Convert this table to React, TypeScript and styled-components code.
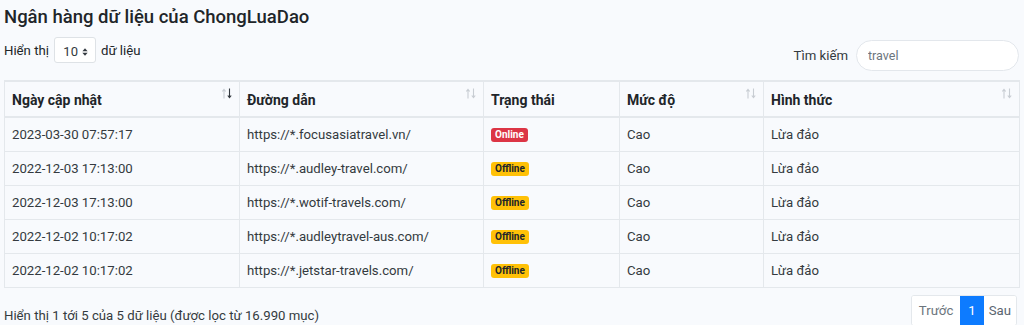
import * as React from "react";
import styled, { createGlobalStyle } from "styled-components";

const GlobalStyle = createGlobalStyle`
  html, body {
    margin: 0;
    padding: 0;
    background: #f8fafd;
    font-family: Roboto, "Noto Sans", Arial, sans-serif;
    color: #212529;
  }
`;

type Row = {
  date: string;
  url: string;
  online: boolean;
};

const rows: Row[] = [
  { date: "2023-03-30 07:57:17", url: "https://*.focusasiatravel.vn/", online: true },
  { date: "2022-12-03 17:13:00", url: "https://*.audley-travel.com/", online: false },
  { date: "2022-12-03 17:13:00", url: "https://*.wotif-travels.com/", online: false },
  { date: "2022-12-02 10:17:02", url: "https://*.audleytravel-aus.com/", online: false },
  { date: "2022-12-02 10:17:02", url: "https://*.jetstar-travels.com/", online: false }
];

const columns = [
  { label: "Ngày cập nhật", width: 235, sort: "desc" },
  { label: "Đường dẫn", width: 244, sort: "none" },
  { label: "Trạng thái", width: 136, sort: null },
  { label: "Mức độ", width: 144, sort: "none" },
  { label: "Hình thức", width: 256, sort: "none" }
];

const SortIcon = ({ dir }: { dir: string }) => {
  const up = dir === "asc" ? "#343a40" : "#c8cdd3";
  const down = dir === "desc" ? "#343a40" : "#c8cdd3";
  return (
    <SortArrows viewBox="0 0 10 11">
      <path d="M2 10.5 V1.5 M0.3 3.5 L2 1.3 L3.7 3.5" stroke={up} strokeWidth="1.1" fill="none" />
      <path d="M7.5 0.5 V9.5 M5.8 7.5 L7.5 9.7 L9.2 7.5" stroke={down} strokeWidth="1.1" fill="none" />
    </SortArrows>
  );
};

const App = () => {
  return (
    <Page>
      <GlobalStyle />
      <Title>Ngân hàng dữ liệu của ChongLuaDao</Title>
      <Controls>
        <LengthLabel>
          Hiển thị
          <Select>
            10
            <Caret viewBox="0 0 8 12">
              <path d="M4 1 L7.5 5 H0.5 Z" fill="#343a40" />
              <path d="M4 11 L7.5 7 H0.5 Z" fill="#343a40" />
            </Caret>
          </Select>
          dữ liệu
        </LengthLabel>
        <SearchLabel>
          Tìm kiếm
          <SearchInput defaultValue="travel" />
        </SearchLabel>
      </Controls>
      <Table>
        <colgroup>
          {columns.map(c => (
            <col key={c.label} style={{ width: c.width }} />
          ))}
        </colgroup>
        <thead>
          <tr>
            {columns.map(c => (
              <Th key={c.label}>
                {c.label}
                {c.sort && <SortIcon dir={c.sort} />}
              </Th>
            ))}
          </tr>
        </thead>
        <tbody>
          {rows.map((r, i) => (
            <tr key={i}>
              <Td>{r.date}</Td>
              <Td>{r.url}</Td>
              <Td>
                <Badge $online={r.online}>{r.online ? "Online" : "Offline"}</Badge>
              </Td>
              <Td>Cao</Td>
              <Td>Lừa đảo</Td>
            </tr>
          ))}
        </tbody>
      </Table>
      <Footer>
        <Info>Hiển thị 1 tới 5 của 5 dữ liệu (được lọc từ 16.990 mục)</Info>
        <Pagination>
          <PageButton $disabled>Trước</PageButton>
          <PageButton $active>1</PageButton>
          <PageButton>Sau</PageButton>
        </Pagination>
      </Footer>
    </Page>
  );
};

const Page = styled.div`
  padding: 0 5px 0 4px;
  font-size: 13.2px;
`;

const Title = styled.h5`
  margin: 0;
  padding-top: 6px;
  font-size: 18.5px;
  font-weight: 500;
  line-height: 22px;
`;

const Controls = styled.div`
  display: flex;
  justify-content: space-between;
  align-items: flex-start;
  margin-top: 10px;
  height: 42px;
`;

const LengthLabel = styled.label`
  display: flex;
  align-items: center;
  gap: 5px;
  font-size: 13.2px;
  margin-top: -1px;
`;

const Select = styled.div`
  display: flex;
  align-items: center;
  justify-content: flex-end;
  gap: 4px;
  width: 42px;
  height: 26px;
  box-sizing: border-box;
  padding: 3px 7px 0 0;
  background: #fff;
  border: 1px solid #dee2e6;
  border-radius: 3px;
  font-size: 13px;
  color: #343a40;
`;

const Caret = styled.svg`
  width: 6px;
  height: 10px;
`;

const SearchLabel = styled.label`
  display: flex;
  align-items: center;
  gap: 8px;
  padding-top: 2px;
  font-size: 13.2px;
  color: #343a40;
`;

const SearchInput = styled.input`
  width: 163px;
  height: 31px;
  box-sizing: border-box;
  border: 1px solid #e3e7ec;
  border-radius: 16px;
  background: #fff;
  padding: 0 11px;
  font-family: inherit;
  font-size: 12.5px;
  color: #6c757d;
  outline: none;
`;

const Table = styled.table`
  width: 1015px;
  table-layout: fixed;
  border-collapse: collapse;
  border-top: 2px solid #e4e8ec;
  border-left: 1px solid #e4e8ec;
  border-right: 1px solid #e4e8ec;
`;

const Th = styled.th`
  position: relative;
  height: 32px;
  padding: 2px 7px 0 7px;
  text-align: left;
  font-size: 14px;
  font-weight: 700;
  border-right: 1px solid #e4e8ec;
  border-bottom: 2px solid #e4e8ec;
  color: #212529;
`;

const SortArrows = styled.svg`
  position: absolute;
  right: 7px;
  top: 6px;
  width: 10px;
  height: 11px;
`;

const Td = styled.td`
  height: 33px;
  padding: 0 7px;
  font-size: 13.2px;
  color: #343a40;
  border-right: 1px solid #e4e8ec;
  border-bottom: 1px solid #e4e8ec;
  white-space: nowrap;
`;

const Badge = styled.span<{ $online?: boolean }>`
  display: inline-block;
  padding: 2px 4px 2px;
  border-radius: 3px;
  font-size: 10px;
  font-weight: 700;
  line-height: 10px;
  color: ${props => (props.$online ? "#fff" : "#212529")};
  background: ${props => (props.$online ? "#dc3545" : "#ffc107")};
  vertical-align: middle;
`;

const Footer = styled.div`
  display: flex;
  justify-content: space-between;
  align-items: flex-start;
  margin-top: 7px;
`;

const Info = styled.div`
  padding-top: 13px;
  font-size: 13.2px;
  color: #343a40;
`;

const Pagination = styled.div`
  display: flex;
  margin-right: 2px;
  border: 1px solid #e4e8ec;
  border-radius: 3px;
  background: #fff;
  overflow: hidden;
`;

const PageButton = styled.span<{ $active?: boolean; $disabled?: boolean }>`
  display: flex;
  align-items: center;
  height: 29px;
  padding: 0 ${props => (props.$active ? "8px" : props.$disabled ? "7px" : "5px")};
  font-size: 13.2px;
  color: ${props => (props.$active ? "#fff" : props.$disabled ? "#6c757d" : "#5a6570")};
  background: ${props => (props.$active ? "#0d7bff" : "#fff")};
`;

export default App;
